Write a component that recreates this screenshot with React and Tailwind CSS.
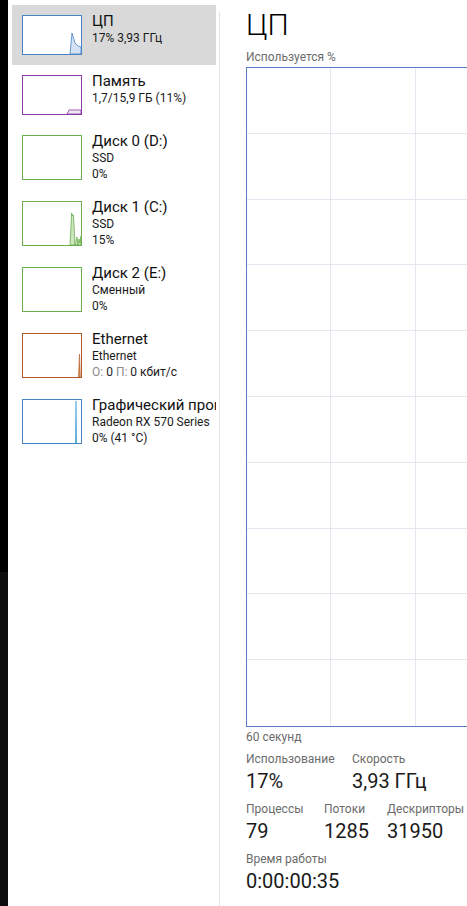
import React from "react";

const font = { fontFamily: '"Segoe UI", Roboto, "Noto Sans", sans-serif' };

function Thumb({ color, h, children }) {
  return (
    <div
      className={`w-[60px] shrink-0 border bg-white ${h}`}
      style={{ borderColor: color }}
    >
      <svg viewBox={h === "h-[40px]" ? "0 0 58 38" : "0 0 58 43"} className="w-full h-full" preserveAspectRatio="none">
        {children}
      </svg>
    </div>
  );
}

function SideItem({ selected, thumb, title, lines, tall }) {
  return (
    <div
      className={`flex gap-[10px] pl-[10px] pt-[10px] whitespace-nowrap overflow-hidden ${
        tall ? "h-[66px]" : "h-[60px]"
      } ${selected ? "bg-[#d9d9d9]" : ""}`}
    >
      {thumb}
      <div className="flex flex-col -mt-[3px]">
        <div className="text-[15px] leading-[18px] text-[#111]">{title}</div>
        {lines.map((l, i) => (
          <div key={i} className="text-[12px] leading-[16px] text-[#1a1a1a]">
            {l}
          </div>
        ))}
      </div>
    </div>
  );
}

function Stat({ label, value, w }) {
  return (
    <div className={`flex flex-col shrink-0 whitespace-nowrap ${w}`}>
      <div className="text-[12px] leading-[16px] text-[#6b6b6b]">{label}</div>
      <div className="text-[20px] leading-[28px] text-[#1a1a1a]">{value}</div>
    </div>
  );
}

export default function App() {
  const rows = Array.from({ length: 10 });
  const cols = Array.from({ length: 10 });

  return (
    <div className="flex w-[467px] h-[906px] overflow-hidden bg-white" style={font}>
      {/* window behind */}
      <div className="w-[8px] shrink-0 flex flex-col">
        <div className="h-[572px] bg-black" />
        <div className="flex-1 bg-[#0d0d0d]" />
      </div>

      {/* sidebar */}
      <aside className="w-[208px] shrink-0 pl-[4px] pt-[5px]">
        <SideItem
          selected
          title="ЦП"
          lines={["17% 3,93 ГГц"]}
          thumb={
            <Thumb color="#4a82c3" h="h-[40px]">
              <path d="M47 38 L49 17 L52 27 L55 30 L58 31 L58 38 Z" fill="#d3e3f3" stroke="#4a82c3" strokeWidth="0.8" />
            </Thumb>
          }
        />
        <SideItem
          title="Память"
          lines={["1,7/15,9 ГБ (11%)"]}
          thumb={
            <Thumb color="#8a3aa6" h="h-[40px]">
              <path d="M44 38 L46 34 L58 34 L58 38 Z" fill="#efe6f3" stroke="#8a3aa6" strokeWidth="0.8" />
            </Thumb>
          }
        />
        <SideItem
          tall
          title="Диск 0 (D:)"
          lines={["SSD", "0%"]}
          thumb={<Thumb color="#6aae4e" h="h-[45px]" />}
        />
        <SideItem
          tall
          title="Диск 1 (C:)"
          lines={["SSD", "15%"]}
          thumb={
            <Thumb color="#6aae4e" h="h-[45px]">
              <path
                d="M47 43 L48.7 11 L49.5 14 L50.5 13 L52 43 L54 35 L55 43 L56 37 L57 41 L58 34 L58 43 Z"
                fill="#cfe6c0"
                stroke="#6aae4e"
                strokeWidth="0.8"
              />
            </Thumb>
          }
        />
        <SideItem
          tall
          title="Диск 2 (E:)"
          lines={["Сменный", "0%"]}
          thumb={<Thumb color="#6aae4e" h="h-[45px]" />}
        />
        <SideItem
          tall
          title="Ethernet"
          lines={[
            "Ethernet",
            <span key="e">
              <span className="text-[#8a8a8a]">О:</span> 0 <span className="text-[#8a8a8a]">П:</span> 0 кбит/с
            </span>,
          ]}
          thumb={
            <Thumb color="#b0582c" h="h-[45px]">
              <path d="M55.5 43 L56.5 20 L57.3 43 Z" fill="#d98a4a" stroke="#b0582c" strokeWidth="0.6" />
            </Thumb>
          }
        />
        <SideItem
          tall
          title="Графический процессор 0"
          lines={["Radeon RX 570 Series", "0% (41 °C)"]}
          thumb={
            <Thumb color="#4a82c3" h="h-[45px]">
              <path d="M52.5 43 L53 1 L53.6 43 Z" fill="#3a9ad6" stroke="#3a9ad6" strokeWidth="0.6" />
            </Thumb>
          }
        />
      </aside>

      {/* separator */}
      <div className="w-[3px] shrink-0" />
      <div className="w-px shrink-0 mt-[12px] bg-[#e2e2e2]" />

      {/* main */}
      <main className="flex-1 min-w-0 pl-[26px] overflow-hidden">
        <h1 className="h-[50px] pt-[7px] text-[30px] leading-[36px] font-light text-black">ЦП</h1>
        <div className="h-[17px] text-[12px] leading-[14px] text-[#6b6b6b]">Используется %</div>

        <div className="w-[846px] h-[660px] border border-[#5a7cc4] grid grid-cols-10 grid-rows-10">
          {rows.map((_, r) =>
            cols.map((_, c) => (
              <div
                key={`${r}-${c}`}
                className={`${c < 9 ? "border-r" : ""} ${r < 9 ? "border-b" : ""} border-[#e3e7ef]`}
              />
            ))
          )}
        </div>

        <div className="h-[24px] pt-[2px] text-[12px] leading-[16px] text-[#6b6b6b]">60 секунд</div>

        <div className="flex flex-col gap-[6px]">
          <div className="flex">
            <Stat label="Использование" value="17%" w="w-[106px]" />
            <Stat label="Скорость" value="3,93 ГГц" w="w-[110px]" />
          </div>
          <div className="flex">
            <Stat label="Процессы" value="79" w="w-[78px]" />
            <Stat label="Потоки" value="1285" w="w-[63px]" />
            <Stat label="Дескрипторы" value="31950" w="w-[80px]" />
          </div>
          <div className="flex">
            <Stat label="Время работы" value="0:00:00:35" w="w-[150px]" />
          </div>
        </div>
      </main>
    </div>
  );
}
